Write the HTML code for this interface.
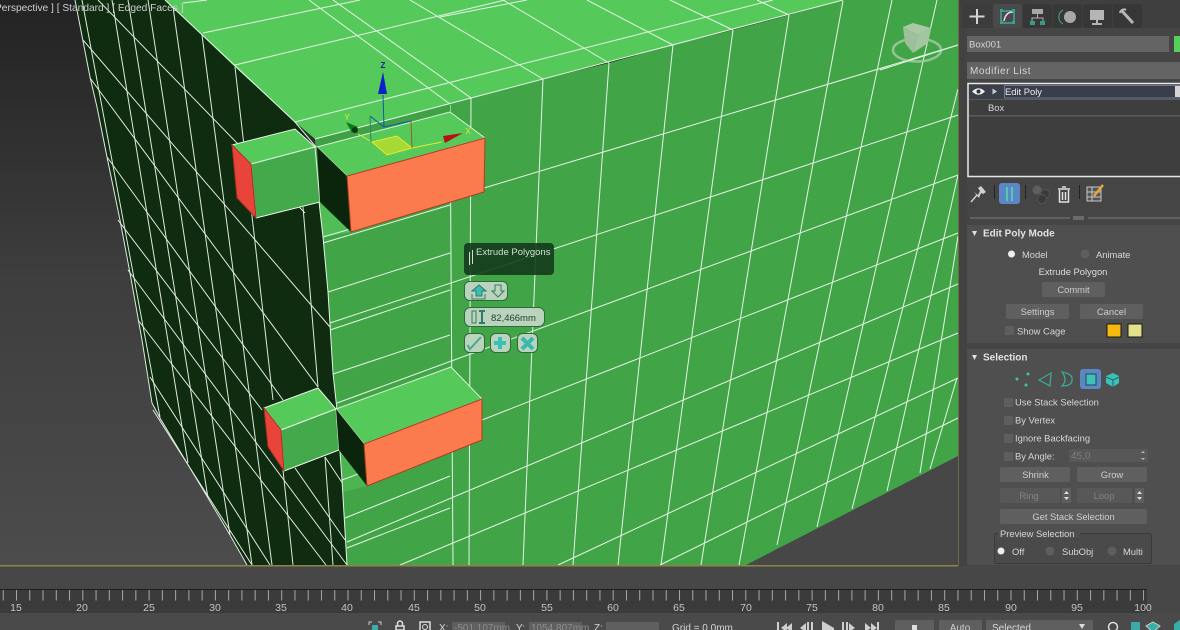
<!DOCTYPE html>
<html><head><meta charset="utf-8"><style>
html,body{margin:0;padding:0;background:#474747;width:1180px;height:630px;overflow:hidden}
svg{display:block;font-family:"Liberation Sans",sans-serif;filter:blur(.35px)}
.e{stroke:#e6f3e6;stroke-width:1;fill:none}
.d{stroke:#dfeadf;stroke-width:1;fill:none}
.t{fill:#d6d6d6;font-size:9.4px}
.s{fill:#d6d6d6;font-size:10px}
.c{fill:#cdcdcd;font-size:9.4px;text-anchor:middle}
.b{fill:#5f5f5f}
.h{fill:#e2e2e2;font-size:10px;font-weight:bold}
.k{fill:#5e5e5e}
.lbl{fill:#c4c4c4;font-size:10.5px;text-anchor:middle}
</style></head><body>
<svg width="1180" height="630" viewBox="0 0 1180 630" xmlns="http://www.w3.org/2000/svg">
<defs>
<linearGradient id="bg" x1="0" y1="0" x2="0" y2="1"><stop offset="0" stop-color="#232323"/><stop offset=".5" stop-color="#3e3e3e"/><stop offset="1" stop-color="#4c4c4c"/></linearGradient>
<pattern id="tk" x="2.74" y="590" width="13.26" height="11" patternUnits="userSpaceOnUse"><rect x="0" y="0" width="1" height="10.5" fill="#a8a8a8"/></pattern>
</defs>
<rect width="958" height="565" fill="url(#bg)"/>
<rect x="700" y="440" width="258" height="125" fill="#474747"/>

<!-- dark side -->
<polygon points="75,0 165,0 202,35 235,67 295,122 316,147 319,202 323,237 328,292 333,373 337,410 342,480 347,565 247,565 230,535 208,498 187,463 160,418 152,403 142,340 130,273 120,220 107,157 97,107 90,77" fill="#0f2c10"/>
<g class="d">
<polyline points="75,0 90,77 97,107 107,157 120,220 130,273 142,340 152,403 160,418 187,463 208,498 230,535 247,565"/>
<path d="M82,0L160,417M112,0L188,463M128,0L208,498M148,0L230,535M172,0L252,565M202,35L272,565M235,67L273,400M283,470L293,565M303,207L318,387M325,457L333,565"/>
<path d="M98,0L305,213M83,40L330,327M90,78L318,387M107,157L283,400M118,220L262,410M295,468L345,540M128,270L347,565M138,320L326,565M150,377L270,565M153,410L252,565M325,457L347,490"/>
</g>

<!-- front -->
<polygon points="315,139 450,104 471,98 543,79 609,63 673,45 733,30 789,15 843,0 958,0 958,456 746,565 347,565 342,480 337,410 333,373 328,292 323,237 319,202" fill="#41a548"/>
<polygon points="319,202 351,232 323,237" fill="#50bd56"/>
<polygon points="340,450 367,486 343,492" fill="#4cb552"/>
<g class="e">
<path d="M319,202L323,237L328,292L333,373L337,410L342,480L347,565"/>
<path d="M450,105L453,565M471,98L469,565M543,79L523,565M609,63L573,565M673,45L618,565M733,30L661,565M789,15L701,565M843,1L739,565M892,0L777,545M937,0L817,527M958,89L852,509M958,175L887,491M958,236L920,473M957,378L930,469"/>
<path d="M484,188L958,45M330,323L958,115M337,403L958,175M482,420L958,233M347,542L958,284M400,565L958,333M558,565L958,378M660,565L958,418"/>
<path d="M323,237L450,200M323,243L450,205M328,292L450,253M330,330L450,290M333,374L450,335M345,518L450,476M347,548L450,508M342,480L450,440"/>
</g>

<!-- top -->
<polygon points="165,0 843,0 471,98 450,104 315,139 295,122 235,67" fill="#55c95a"/>
<polygon points="315,139 450,104 450,113 318,147" fill="#3fa046"/>
<g class="e">
<path d="M165,0L295,122L316,147M315,139L471,98L843,0"/>
<path d="M183,3L207,0M203,33L360,0M235,65L505,0M295,122L773,0M440,17L527,0M318,147L450,113"/>
<path d="M309,0L450,104M333,0L471,98M410,0L543,79M503,0L609,63M587,0L673,45M670,0L733,30M757,0L789,15"/>
</g>

<!-- block A -->
<polygon points="232,145 295,129 315,147 251,164" fill="#55c95a" stroke="#e6f3e6"/>
<polygon points="251,164 315,147 320,202 256,218" fill="#44a94b" stroke="#e6f3e6"/>
<polygon points="232,145 251,164 256,218 237,198" fill="#e8443a" stroke="#a03020"/>
<!-- block B -->
<polygon points="317,147 450,112 485,138 347,176" fill="#55c95a" stroke="#d8f0d8"/>
<polygon points="317,147 347,176 351,232 320,202" fill="#0b240c"/>
<polygon points="347,176 485,138 484,192 351,232" fill="#fb7a4e" stroke="#a84020"/>
<!-- block C -->
<polygon points="264,408 318,388 336,409 281,430" fill="#55c95a" stroke="#e6f3e6"/>
<polygon points="281,430 336,409 339,450 284,471" fill="#44a94b" stroke="#e6f3e6"/>
<polygon points="264,408 281,430 284,471 268,447" fill="#e8443a" stroke="#a03020"/>
<!-- block D -->
<polygon points="336,409 451,367 482,399 364,444" fill="#55c95a" stroke="#d8f0d8"/>
<polygon points="336,409 364,444 367,486 339,450" fill="#0b240c"/>
<polygon points="364,444 482,399 482,440 367,486" fill="#fb7a4e" stroke="#a84020"/>

<!-- gizmo -->
<polygon points="372,142 397,136 412,148 387,155" fill="#a6d934"/>
<path d="M372,142L397,136L412,148L387,155Z" fill="none" stroke="#e6e82e"/>
<path d="M358,134L372,142M412,148L442,142" stroke="#e6e82e" fill="none"/>
<path d="M383,95L384,127M370,116L384,127L411,121" stroke="#0a5ca8" fill="none"/>
<path d="M370,116L371,142" stroke="#2c8a5e" fill="none"/>
<path d="M411,121L412,148" stroke="#a05a20" fill="none"/>
<polygon points="383,72 378,94 387,94" fill="#1020c8"/>
<polygon points="463,133 443,136 445,143" fill="#b81010"/>
<polygon points="346,122 352,133 358,127" fill="#0f7a18"/>
<circle cx="355" cy="130" r="3" fill="#0a3a10"/>
<text x="383" y="68" font-size="8" font-weight="bold" fill="#1020a0" text-anchor="middle">Z</text>
<text x="347" y="120" font-size="8" fill="#e6e82e" text-anchor="middle">Y</text>
<text x="468" y="134" font-size="8" fill="#e6e82e" text-anchor="middle">X</text>

<!-- viewcube -->
<ellipse cx="917" cy="50" rx="24" ry="11.500" fill="none" stroke="#a8cca8" stroke-width="2.500" opacity=".8"/>
<polygon points="903,27 913,23 931,28 918,35" fill="#a9c9a6"/>
<polygon points="903,27 918,35 913,53 905,43" fill="#9cc09a"/>
<polygon points="918,35 931,28 928,43 913,53" fill="#a3c5a0"/>
<path d="M958,45L880,70" stroke="#e6f3e6" fill="none"/>

<!-- tooltip -->
<rect x="464" y="243" width="90" height="32" rx="4" fill="#12381a" opacity=".88"/>
<path d="M469.500,252V265M472.500,250V264" stroke="#cfe0cf" fill="none"/>
<text x="476" y="255" font-size="9.500" fill="#cfe0cf">Extrude Polygons</text>
<g stroke="#2d6b3a" fill="#b9d3bc">
<rect x="464.500" y="281.500" width="43" height="19" rx="5"/>
<rect x="464.500" y="307.500" width="80" height="19" rx="6"/>
<rect x="464.500" y="333.500" width="20" height="19" rx="5"/>
<rect x="490.500" y="333.500" width="20" height="19" rx="5"/>
<rect x="517.500" y="333.500" width="20" height="19" rx="5"/>
</g>
<path d="M472,291L479,285L486,291H482V296H476V291Z" fill="#3dbdb0" stroke="#2a7a70"/>
<path d="M472,294V299H485V294" fill="none" stroke="#3a7a60"/>
<path d="M495,285H501V291H504L498,297L492,291H495Z" fill="none" stroke="#3a7a60"/>
<rect x="472" y="311" width="4" height="12" fill="none" stroke="#3a7a60"/>
<path d="M479,311H485M479,323H485M482,311V323" stroke="#2f7a68" stroke-width="2" fill="none"/>
<text x="491" y="321" font-size="9.500" fill="#20422a">82,466mm</text>
<path d="M467.500,345L470,349L481,337" fill="none" stroke="#4aa890" stroke-width="2"/>
<path d="M500,337V349M494,343H506" stroke="#38c0b8" stroke-width="4" fill="none"/>
<path d="M522,338L533,349M533,338L522,349" stroke="#38b8b0" stroke-width="4" fill="none"/>

<!-- viewport label -->
<text x="-5" y="11" font-size="10.200" fill="#cfcfcf">Perspective ] [ Standard ] [ Edged Faces ]</text>

<!-- bottom border -->
<rect x="0" y="565" width="958" height="1.500" fill="#8d8446"/>
<rect x="958" y="0" width="1" height="566" fill="#6e6a42"/>

<!-- bottom -->
<rect x="0" y="566.500" width="1180" height="63.500" fill="#474747"/>
<rect x="0" y="590" width="1147" height="23" fill="#3b3b3b"/>
<rect x="0" y="589" width="1147" height="1" fill="#1d1d1d"/>
<rect x="0" y="590" width="1144" height="11" fill="url(#tk)"/>
<g class="lbl">
<text x="16" y="611">15</text><text x="82" y="611">20</text><text x="149" y="611">25</text><text x="215" y="611">30</text><text x="281" y="611">35</text><text x="347" y="611">40</text><text x="414" y="611">45</text><text x="480" y="611">50</text><text x="547" y="611">55</text><text x="613" y="611">60</text><text x="679" y="611">65</text><text x="746" y="611">70</text><text x="812" y="611">75</text><text x="878" y="611">80</text><text x="944" y="611">85</text><text x="1011" y="611">90</text><text x="1077" y="611">95</text><text x="1143" y="611">100</text>
</g>
<rect x="0" y="613" width="1180" height="17" fill="#4a4a4a"/>

<!-- status row -->
<rect x="372" y="625" width="6" height="5" fill="#38b0a8"/>
<path d="M369,625V622H372M378,622H381V625" stroke="#ccc" fill="none"/>
<path d="M396,630V626H404V630ZM397.500,626V623.500A2.500,2.500 0 0 1 402.500,623.500V626" fill="none" stroke="#ddd" stroke-width="1.500"/>
<rect x="420" y="622" width="10" height="9" fill="none" stroke="#ddd" stroke-width="1.500"/>
<circle cx="425" cy="627" r="2.500" fill="none" stroke="#ddd"/>
<text x="439" y="631" class="s">X:</text>
<rect x="452" y="622" width="53" height="10" fill="#5f5f5f"/>
<text x="454" y="631" font-size="10" fill="#8e8e8e">-501,107mm</text>
<text x="516" y="631" class="s">Y:</text>
<rect x="529" y="622" width="53" height="10" fill="#5f5f5f"/>
<text x="531" y="631" font-size="10" fill="#8e8e8e">1054,807mm</text>
<text x="594" y="631" class="s">Z:</text>
<rect x="606" y="622" width="53" height="10" fill="#5f5f5f"/>
<text x="672" y="631" class="s">Grid = 0,0mm</text>
<g fill="#cfcfcf">
<rect x="777" y="622" width="2" height="10"/><polygon points="787,623 781,628 787,632"/><polygon points="792,623 786,628 792,632"/>
<polygon points="806,623 800,628 806,632"/><rect x="807" y="622" width="2" height="10"/><rect x="811" y="622" width="2" height="10"/>
<polygon points="822,621 834,628 834,632 822,632"/>
<rect x="842" y="622" width="2" height="10"/><rect x="846" y="622" width="2" height="10"/><polygon points="849,623 855,628 849,632"/>
<polygon points="865,623 871,628 865,632"/><polygon points="871,623 877,628 871,632"/><rect x="877" y="622" width="2" height="10"/>
</g>
<rect x="895" y="620" width="39" height="12" rx="2" class="b"/>
<rect x="912" y="625" width="5" height="5" fill="#ddd"/>
<rect x="939" y="620" width="43" height="12" rx="2" class="b"/>
<text x="960" y="631" class="c" style="font-size:10px">Auto</text>
<rect x="986" y="620" width="107" height="12" rx="2" class="b"/>
<text x="992" y="631" class="s">Selected</text>
<polygon points="1079,624 1085,624 1082,629" fill="#ddd"/>
<circle cx="1113" cy="627" r="4.500" fill="none" stroke="#ddd" stroke-width="1.500"/>
<rect x="1131" y="622" width="9" height="8" fill="#3eaaa8"/>
<polygon points="1153,622 1160,626 1153,632 1146,626" fill="#35b0a8" stroke="#ccc"/>
<polygon points="1174,624 1180,620 1180,632 1174,632" fill="#35b0a8"/>

<!-- panel -->
<rect x="959" y="0" width="221" height="566" fill="#454545"/>
<rect x="959" y="0" width="8" height="566" fill="#424242"/>
<rect x="959" y="0" width="221" height="28" fill="#3f3f3f"/>
<rect x="993" y="4" width="29" height="24" rx="3" fill="#4a4a4a"/>
<rect x="1023" y="4" width="29" height="24" rx="3" fill="#373737"/>
<rect x="1053" y="4" width="29" height="24" rx="3" fill="#373737"/>
<rect x="1083" y="4" width="29" height="24" rx="3" fill="#373737"/>
<rect x="1113" y="4" width="29" height="24" rx="3" fill="#373737"/>
<rect x="963" y="4" width="29" height="24" rx="3" fill="#3c3c3c"/>
<path d="M977,9V24M969.500,16.500H984.500" stroke="#d4d4d4" stroke-width="2" fill="none"/>
<rect x="1001" y="11" width="13" height="12" fill="none" stroke="#3aa8a0" stroke-width="1.500"/>
<path d="M1004,21C1005,15 1008,12 1013,12" fill="none" stroke="#e0e0e0" stroke-width="1.500"/>
<g fill="#3aa090"><rect x="1000" y="9" width="3" height="3"/><rect x="1012" y="9" width="3" height="3"/><rect x="1000" y="21" width="3" height="3"/><rect x="1012" y="21" width="3" height="3"/></g>
<rect x="1032" y="9" width="11" height="5" fill="#a8a8a8"/>
<path d="M1037.500,14V18M1032,21V18H1043V21" fill="none" stroke="#b0b0b0"/>
<rect x="1030" y="21" width="5" height="4" fill="#3a9a88"/><rect x="1040" y="21" width="5" height="4" fill="#3a9a88"/>
<circle cx="1070" cy="17" r="6" fill="#a8a8a8"/>
<path d="M1063,10A8,8 0 0 0 1063,24M1060.500,12A8,8 0 0 0 1060.500,22" fill="none" stroke="#3aa090"/>
<rect x="1090" y="10" width="14" height="10" fill="#b5b5b5"/>
<path d="M1097,20V23M1092,24H1102" stroke="#b5b5b5" stroke-width="2" fill="none"/>
<path d="M1122,11L1133,23" stroke="#b8b8b8" stroke-width="3" fill="none"/>
<path d="M1120,13A4,4 0 0 1 1126,10" stroke="#b8b8b8" stroke-width="2" fill="none"/>

<rect x="967" y="36" width="202" height="16" fill="#646464"/>
<text x="969" y="47.500" class="t" style="font-size:9.500px">Box001</text>
<rect x="1174" y="36" width="6" height="16" fill="#57d05a"/>
<rect x="967" y="62" width="213" height="17" fill="#646464"/>
<text x="970" y="74" class="s" style="letter-spacing:.55px">Modifier List</text>
<rect x="968" y="83.500" width="213" height="93" fill="#3e3e3e" stroke="#e8e8e8" stroke-width="1.500"/>
<rect x="969" y="85" width="211" height="14" fill="#3b3f4a"/>
<rect x="1004.500" y="85.500" width="175" height="12.500" fill="#3a3e4b" stroke="#6d7690"/>
<rect x="1175" y="86" width="5" height="11" fill="#d4d4d4"/>
<path d="M972,91.500Q978.500,85 985,91.500Q978.500,98 972,91.500Z" fill="#eee"/>
<circle cx="978.500" cy="91.500" r="2" fill="#333"/>
<polygon points="992.500,88.500 997,91.500 992.500,94.500" fill="#ccc"/>
<text x="1005" y="95" class="t" style="fill:#eee">Edit Poly</text>
<rect x="969" y="99" width="211" height="1" fill="#5a5a5a"/>
<text x="988" y="111" class="t">Box</text>
<rect x="969" y="115" width="211" height="1.500" fill="#5c5c5c"/>

<!-- stack toolbar -->
<path d="M971,202L977,195" stroke="#d0d0d0" stroke-width="1.500" fill="none"/>
<path d="M974,192L978,195L980,191L978,188L981,186L986,192L983,194L981,193L979,198Z" fill="#d0d0d0"/>
<rect x="994" y="185" width="1" height="14" fill="#222"/>
<rect x="999" y="183" width="21" height="21" rx="3" fill="#5c87c4"/>
<path d="M1007,187V201M1012,187V201" stroke="#52c8b8" stroke-width="2" fill="none"/>
<rect x="1025" y="185" width="1" height="14" fill="#222"/>
<circle cx="1037" cy="190" r="4.500" fill="#5f5f5f"/><circle cx="1045" cy="194" r="4.500" fill="#3a3a3a" stroke="#555"/><circle cx="1042" cy="199" r="4.500" fill="#3a3a3a" stroke="#555"/>
<path d="M1058,189H1070M1062,187H1066M1059.500,190V202H1068.500V190M1062.500,192V200M1065.500,192V200" stroke="#e2e2e2" stroke-width="1.500" fill="none"/>
<rect x="1079" y="185" width="1" height="14" fill="#222"/>
<rect x="1087" y="187" width="14" height="14" fill="#555" stroke="#c8c8c8"/>
<path d="M1087,192H1101M1087,197H1101M1092,187V201" stroke="#c8c8c8" fill="none"/>
<path d="M1094,196L1103,185" stroke="#e8a83a" stroke-width="2.500" fill="none"/>

<path d="M970,218H1070M1088,218H1180" stroke="#7a7a7a" fill="none"/>
<path d="M1073,217H1084M1073,219H1084" stroke="#909090" fill="none"/>

<!-- edit poly mode -->
<rect x="967" y="225" width="213" height="118" fill="#4f4f4f"/>
<polygon points="972,231 977,231 974.500,236" fill="#e0e0e0"/>
<text x="983" y="236.500" class="h">Edit Poly Mode</text>
<circle cx="1011.500" cy="254" r="3.500" fill="#eee"/>
<text x="1022" y="258" class="t">Model</text>
<circle cx="1085" cy="254" r="4.500" fill="#5e5e5e"/>
<text x="1096" y="258" class="t">Animate</text>
<text x="1073" y="275" class="c" style="fill:#ddd">Extrude Polygon</text>
<rect x="1042" y="282" width="63" height="15" rx="2" class="b"/>
<text x="1073.500" y="293" class="c">Commit</text>
<rect x="1006" y="304" width="63" height="15" rx="2" class="b"/>
<text x="1037.500" y="315" class="c">Settings</text>
<rect x="1080" y="304" width="63" height="15" rx="2" class="b"/>
<text x="1111.500" y="315" class="c">Cancel</text>
<rect x="1005" y="326" width="9" height="9" class="k"/>
<text x="1017" y="334.500" class="t">Show Cage</text>
<rect x="1107" y="324" width="14" height="13" fill="#f7b90e" stroke="#1a1a1a"/>
<rect x="1128" y="324" width="14" height="13" fill="#e2e28c" stroke="#1a1a1a"/>

<!-- selection -->
<rect x="967" y="349" width="213" height="216" fill="#4f4f4f"/>
<polygon points="972,355 977,355 974.500,360" fill="#e0e0e0"/>
<text x="983" y="360.500" class="h">Selection</text>
<g fill="#3fc0b0"><circle cx="1017" cy="379" r="1.500"/><circle cx="1028" cy="374" r="1.500"/><circle cx="1026" cy="385" r="1.500"/></g>
<polygon points="1039,380 1051,373 1050,386" fill="none" stroke="#3aa898" stroke-width="1.300"/>
<path d="M1062,372Q1073,374 1072,380Q1072,386 1062,386Q1068,380 1062,372Z" fill="none" stroke="#3aa898" stroke-width="1.300"/>
<rect x="1080" y="369" width="21" height="20" rx="3" fill="#5c87c4"/>
<rect x="1086" y="374" width="10" height="11" fill="#3fc0b8" stroke="#1c4a4a"/>
<polygon points="1113,373 1119,376 1119,383 1113,387 1106,383 1106,376" fill="#3cc0b8"/>
<path d="M1106,377L1113,380L1119,377M1113,380V387" stroke="#1e6a6a" fill="none"/>
<rect x="1004" y="398" width="9" height="9" class="k"/><text x="1015" y="405.500" class="t">Use Stack Selection</text>
<rect x="1004" y="416" width="9" height="9" class="k"/><text x="1015" y="423.500" class="t">By Vertex</text>
<rect x="1004" y="434" width="9" height="9" class="k"/><text x="1015" y="441.500" class="t">Ignore Backfacing</text>
<rect x="1004" y="452" width="9" height="9" class="k"/><text x="1015" y="459.500" class="t">By Angle:</text>
<rect x="1069" y="449" width="79" height="13" fill="#585858"/>
<text x="1071" y="459" font-size="10" fill="#7c7c7c">45,0</text>
<path d="M1141,453L1143,451L1145,453ZM1141,458L1143,460L1145,458Z" fill="#bbb"/>
<rect x="1000" y="467" width="70" height="15" rx="2" class="b"/><text x="1035.500" y="478" class="c">Shrink</text>
<rect x="1077" y="467" width="70" height="15" rx="2" class="b"/><text x="1112" y="478" class="c">Grow</text>
<rect x="1000" y="488" width="60" height="15" rx="2" fill="#585858"/><text x="1029" y="499" class="c" style="fill:#838383">Ring</text>
<rect x="1062" y="488" width="9" height="15" fill="#5e5e5e"/><path d="M1064,494L1066.500,491L1069,494ZM1064,497L1066.500,500L1069,497Z" fill="#ddd"/>
<rect x="1077" y="488" width="55" height="15" rx="2" fill="#585858"/><text x="1104" y="499" class="c" style="fill:#838383">Loop</text>
<rect x="1135" y="488" width="9" height="15" fill="#5e5e5e"/><path d="M1137,494L1139.500,491L1142,494ZM1137,497L1139.500,500L1142,497Z" fill="#ddd"/>
<rect x="1000" y="509" width="147" height="15" rx="2" class="b"/><text x="1073.500" y="520" class="c">Get Stack Selection</text>
<rect x="994.500" y="533.500" width="157" height="30" rx="2" fill="#4a4a4a" stroke="#3a3a3a"/>
<rect x="998" y="528" width="82" height="10" fill="#4f4f4f"/>
<text x="1000" y="537" class="t">Preview Selection</text>
<circle cx="1001" cy="551" r="3.500" fill="#eee"/><text x="1012" y="555" class="t">Off</text>
<circle cx="1050" cy="551" r="4.500" fill="#5e5e5e"/><text x="1062" y="555" class="t">SubObj</text>
<circle cx="1112" cy="551" r="4.500" fill="#5e5e5e"/><text x="1123" y="555" class="t">Multi</text>
</svg>
</body></html>
